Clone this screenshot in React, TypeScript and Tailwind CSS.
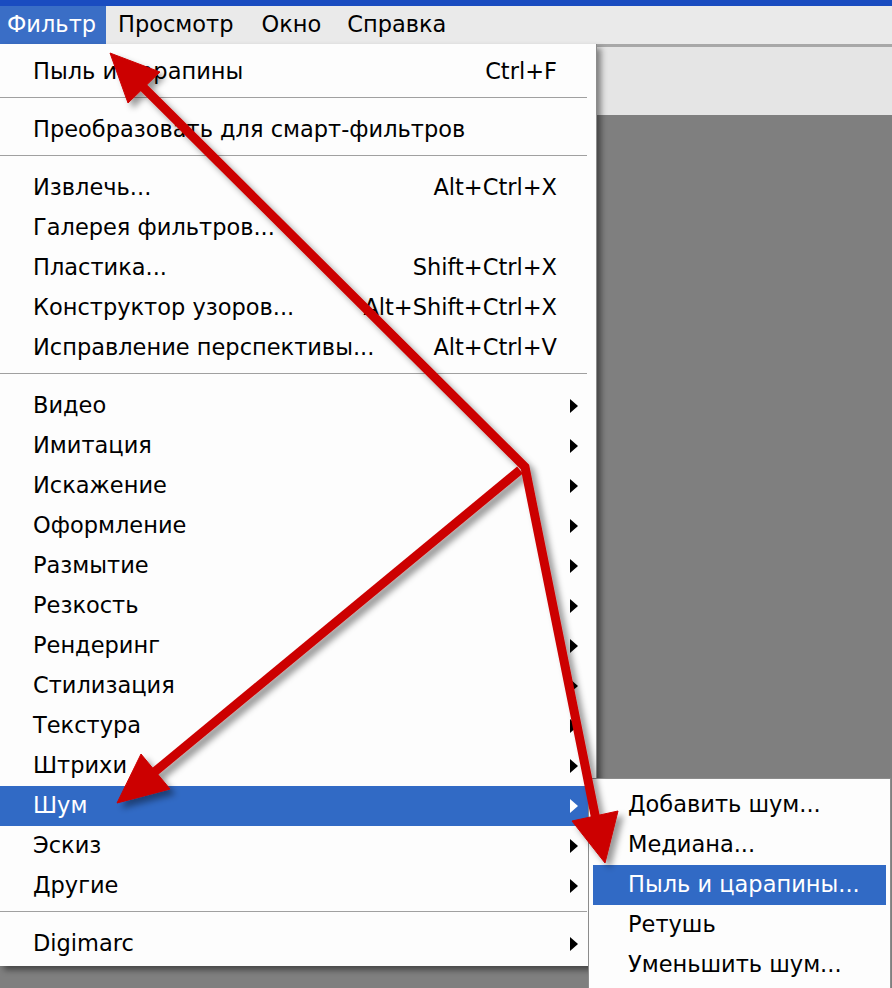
import { FC } from "react";

type Row =
  | { kind: "sep" }
  | { kind: "item"; label: string; shortcut?: string; sub?: boolean; active?: boolean };

const mainMenu: Row[] = [
  { kind: "item", label: "Пыль и царапины", shortcut: "Ctrl+F" },
  { kind: "sep" },
  { kind: "item", label: "Преобразовать для смарт-фильтров" },
  { kind: "sep" },
  { kind: "item", label: "Извлечь...", shortcut: "Alt+Ctrl+X" },
  { kind: "item", label: "Галерея фильтров..." },
  { kind: "item", label: "Пластика...", shortcut: "Shift+Ctrl+X" },
  { kind: "item", label: "Конструктор узоров...", shortcut: "Alt+Shift+Ctrl+X" },
  { kind: "item", label: "Исправление перспективы...", shortcut: "Alt+Ctrl+V" },
  { kind: "sep" },
  { kind: "item", label: "Видео", sub: true },
  { kind: "item", label: "Имитация", sub: true },
  { kind: "item", label: "Искажение", sub: true },
  { kind: "item", label: "Оформление", sub: true },
  { kind: "item", label: "Размытие", sub: true },
  { kind: "item", label: "Резкость", sub: true },
  { kind: "item", label: "Рендеринг", sub: true },
  { kind: "item", label: "Стилизация", sub: true },
  { kind: "item", label: "Текстура", sub: true },
  { kind: "item", label: "Штрихи", sub: true },
  { kind: "item", label: "Шум", sub: true, active: true },
  { kind: "item", label: "Эскиз", sub: true },
  { kind: "item", label: "Другие", sub: true },
  { kind: "sep" },
  { kind: "item", label: "Digimarc", sub: true },
];

const noiseMenu = [
  { label: "Добавить шум..." },
  { label: "Медиана..." },
  { label: "Пыль и царапины...", active: true },
  { label: "Ретушь" },
  { label: "Уменьшить шум..." },
];

const Tri: FC<{ white?: boolean }> = ({ white }) => (
  <svg width="8" height="14" viewBox="0 0 8 14">
    <polygon points="0,0 8,7 0,14" fill={white ? "#ffffff" : "#000000"} />
  </svg>
);

const Arrows: FC = () => (
  <svg
    className="pointer-events-none absolute left-0 top-0"
    width="892"
    height="988"
    viewBox="0 0 892 988"
  >
    <defs>
      <filter id="sh" x="-20%" y="-20%" width="140%" height="140%">
        <feDropShadow dx="5" dy="5" stdDeviation="3" floodColor="#000" floodOpacity="0.4" />
      </filter>
    </defs>
    <g filter="url(#sh)" fill="#cc0000" stroke="#cc0000">
      <polyline
        points="142,86 525,467 596,820"
        fill="none"
        strokeWidth="9"
        strokeLinejoin="miter"
      />
      <line x1="520" y1="470" x2="152" y2="774" strokeWidth="9" />
      <polygon points="110,53 160,72 128,103" strokeWidth="1" />
      <polygon points="117,803 141,754 170,789" strokeWidth="1" />
      <polygon points="605,863 572,821 618,811" strokeWidth="1" />
    </g>
  </svg>
);

const App: FC = () => {
  return (
    <div className="relative h-[988px] w-[892px] overflow-hidden bg-[#7f7f7f] font-['DejaVu_Sans',sans-serif] text-[22.5px] text-black">
      {/* title bar edge + menu bar */}
      <div className="h-[6px] bg-[#1a4cc0]" />
      <div className="flex h-[38px] items-center bg-[#eaeaea]">
        <div className="flex h-full items-center bg-[#3a6ec6] pl-[7px] pr-[10px] text-white">Фильтр</div>
        <div className="ml-[12px]">Просмотр</div>
        <div className="ml-[28px]">Окно</div>
        <div className="ml-[26px]">Справка</div>
      </div>
      {/* options bar */}
      <div className="h-[71px] border-t-[3px] border-[#a8a8a8] bg-[#e5e5e5]" />

      {/* main dropdown */}
      <div className="absolute left-0 top-[44px] w-[597px] border-r border-[#8c8c8c] bg-[#fdfdfd] pb-[2px] pt-[8px] shadow-[4px_4px_6px_rgba(0,0,0,0.45)]">
        {mainMenu.map((r, i) =>
          r.kind === "sep" ? (
            <div key={i} className="h-[18px] pt-[5px]">
              <div className="mr-[9px] h-px bg-[#a0a0a0]" />
            </div>
          ) : (
            <div
              key={i}
              className={`flex h-[40px] items-center pl-[33px] pr-[18px] ${r.active ? "bg-[#316ac5] text-white" : ""}`}
            >
              <span className="flex-1 whitespace-nowrap">{r.label}</span>
              {r.shortcut && <span className="whitespace-nowrap">{r.shortcut}</span>}
              <span className="flex w-[21px] justify-end">{r.sub && <Tri white={r.active} />}</span>
            </div>
          )
        )}
      </div>

      {/* noise submenu */}
      <div className="absolute left-[588px] top-[778px] w-[303px] border border-[#8c8c8c] bg-[#fdfdfd] px-[4px] pt-[6px] pb-[4px]">
        {noiseMenu.map((r, i) => (
          <div
            key={i}
            className={`flex h-[40px] items-center pl-[35px] whitespace-nowrap ${r.active ? "bg-[#316ac5] text-white" : ""}`}
          >
            {r.label}
          </div>
        ))}
      </div>

      <Arrows />
    </div>
  );
};

export default App;
